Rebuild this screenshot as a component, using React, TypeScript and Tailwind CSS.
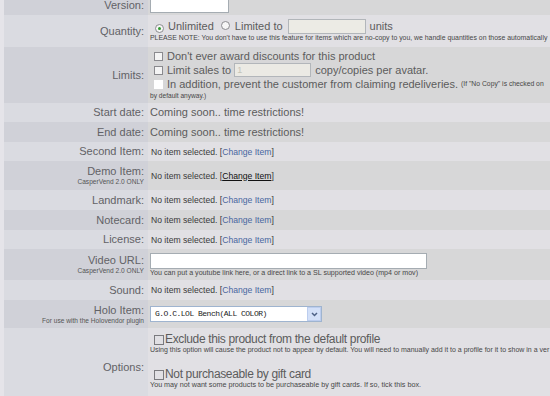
import React from "react";

const F = "font-['Liberation_Sans',Arial,sans-serif]";

function Row({
  dark,
  h,
  label,
  sub,
  labelTop,
  children,
  valueClass = "items-center",
}: {
  dark?: boolean;
  h: string;
  label: string;
  sub?: string;
  labelTop?: string;
  children: React.ReactNode;
  valueClass?: string;
}) {
  return (
    <div className={`flex ${h} shrink-0`}>
      <div className="w-[4px] shrink-0 bg-[#e5e4e9]" />
      <div
        className={`w-[144px] shrink-0 flex flex-col ${labelTop ? labelTop : "justify-center"} items-end pr-[4px] ${
          dark ? "bg-[#d0d1d8]" : "bg-[#dadbe1]"
        }`}
      >
        <div className="text-[11px] leading-[13px] text-[#626266] whitespace-nowrap">{label}</div>
        {sub && <div className="text-[6.6px] leading-[8px] text-[#555] whitespace-nowrap">{sub}</div>}
      </div>
      <div
        className={`flex-1 min-w-0 flex pl-[2px] overflow-hidden ${valueClass} ${
          dark ? "bg-[#d7d7d8]" : "bg-[#e1e0e4]"
        }`}
      >
        {children}
      </div>
    </div>
  );
}

function NoItem({ demo }: { demo?: boolean }) {
  return (
    <div className="text-[8.6px] leading-[10px] text-[#3a3a3a] whitespace-nowrap pl-[1px]">
      No item selected. [
      {demo ? (
        <span className="text-[#111] underline">Change Item</span>
      ) : (
        <span className="text-[#4866a0]">Change Item</span>
      )}
      ]
    </div>
  );
}

function Box({ plain }: { plain?: boolean }) {
  return (
    <span
      className={`inline-block w-[9px] h-[9px] shrink-0 ${
        plain ? "bg-white" : "bg-[#f4f4f4] border border-[#8a8a8e]"
      }`}
    />
  );
}

function Radio({ on }: { on?: boolean }) {
  return (
    <span className="inline-flex items-center justify-center w-[9px] h-[9px] rounded-full border border-[#8c8c90] bg-[#f6f6f6] shrink-0">
      {on && <span className="w-[3px] h-[3px] rounded-full bg-[#2f9a2f]" />}
    </span>
  );
}

export default function App() {
  return (
    <div className={`w-[550px] h-[396px] overflow-hidden bg-[#e1e0e4] ${F}`}>
      <div className="flex flex-col -mt-[4px]">
        <Row dark h="h-[19px]" label="Version:" valueClass="items-start">
          <div className="w-[79px] h-[17px] bg-white border border-[#a5acb2]" />
        </Row>

        <Row h="h-[32px]" label="Quantity:" valueClass="items-start">
          <div className="flex flex-col pt-[4px]">
            <div className="flex items-center h-[15px] text-[11px] text-[#5c5c5c] whitespace-nowrap">
              <span className="ml-[5px]"><Radio on /></span>
              <span className="ml-[4px]">Unlimited</span>
              <span className="ml-[7px]"><Radio /></span>
              <span className="ml-[5px]">Limited to</span>
              <span className="ml-[5px] w-[78px] h-[15px] bg-[#ecebe5] border border-[#b2b6ba]" />
              <span className="ml-[4px]">units</span>
            </div>
            <div className="text-[6.9px] leading-[8px] text-[#474747] whitespace-nowrap">
              PLEASE NOTE: You don't have to use this feature for items which are no-copy to you, we handle quantities on those automatically
            </div>
          </div>
        </Row>

        <Row dark h="h-[56px]" label="Limits:" valueClass="items-start">
          <div className="flex flex-col pt-[3px] text-[11px] text-[#5c5c5c] whitespace-nowrap">
            <div className="flex items-center h-[13px] leading-[13px]">
              <span className="ml-[4px] flex"><Box /></span>
              <span className="ml-[4px]">Don't ever award discounts for this product</span>
            </div>
            <div className="flex items-center h-[14px] leading-[14px]">
              <span className="ml-[4px] flex"><Box /></span>
              <span className="ml-[4px]">Limit sales to</span>
              <span className="ml-[3px] w-[77px] h-[14px] bg-[#ebeae4] border border-[#b2b6ba] text-[9px] leading-[12px] text-[#c4c4b8] pl-[2px]">1</span>
              <span className="ml-[4px]">copy/copies per avatar.</span>
            </div>
            <div className="flex items-center h-[14px] leading-[14px]">
              <span className="ml-[4px] flex"><Box plain /></span>
              <span className="ml-[4px]">In addition, prevent the customer from claiming redeliveries.</span>
              <span className="ml-[3px] text-[6.8px] text-[#474747]">(If "No Copy" is checked on</span>
            </div>
            <div className="h-[9px] text-[6.6px] leading-[9px] text-[#474747]">by default anyway.)</div>
          </div>
        </Row>

        <Row h="h-[19px]" label="Start date:">
          <div className="text-[11px] text-[#5c5c5c] whitespace-nowrap">Coming soon.. time restrictions!</div>
        </Row>
        <Row dark h="h-[20px]" label="End date:">
          <div className="text-[11px] text-[#5c5c5c] whitespace-nowrap">Coming soon.. time restrictions!</div>
        </Row>
        <Row h="h-[19px]" label="Second Item:">
          <NoItem />
        </Row>
        <Row dark h="h-[29px]" label="Demo Item:" sub="CasperVend 2.0 ONLY">
          <NoItem demo />
        </Row>
        <Row h="h-[20px]" label="Landmark:">
          <NoItem />
        </Row>
        <Row dark h="h-[20px]" label="Notecard:">
          <NoItem />
        </Row>
        <Row h="h-[19px]" label="License:">
          <NoItem />
        </Row>
        <Row dark h="h-[31px]" label="Video URL:" sub="CasperVend 2.0 ONLY">
          <div className="flex flex-col">
            <div className="w-[277px] h-[16px] bg-white border border-[#a5acb2]" />
            <div className="text-[7.1px] leading-[8px] text-[#474747] whitespace-nowrap">
              You can put a youtube link here, or a direct link to a SL supported video (mp4 or mov)
            </div>
          </div>
        </Row>
        <Row h="h-[20px]" label="Sound:">
          <NoItem />
        </Row>
        <Row dark h="h-[28px]" label="Holo Item:" sub="For use with the Holovendor plugin">
          <div className="w-[172px] h-[16px] bg-white border border-[#9fb4cf] flex items-center">
            <div className="flex-1 pl-[4px] font-['Liberation_Mono',monospace] text-[8px] tracking-[-0.5px] text-[#222] whitespace-nowrap">
              G.O.C.LOL Bench(ALL COLOR)
            </div>
            <div className="w-[14px] h-[14px] bg-[#d3e0f8] border border-[#bccdee] flex items-center justify-center">
              <svg width="7" height="5" viewBox="0 0 7 5">
                <path d="M1 1 L3.5 3.5 L6 1" stroke="#4d6185" strokeWidth="1.5" fill="none" />
              </svg>
            </div>
          </div>
        </Row>
        <Row h="h-[72px]" label="Options:" labelTop="justify-start pt-[33px]" valueClass="items-start">
          <div className="flex flex-col pt-[5px] whitespace-nowrap">
            <div className="flex items-center h-[13px] leading-[13px] text-[12px] tracking-[-0.35px] text-[#5c5c5c]">
              <span className="ml-[4px] w-[10px] h-[10px] border border-[#7a7a7e] shrink-0" />
              <span className="ml-[1px]">Exclude this product from the default profile</span>
            </div>
            <div className="h-[8px] text-[7px] leading-[8px] text-[#474747]">
              Using this option will cause the product not to appear by default. You will need to manually add it to a profile for it to show in a ver
            </div>
            <div className="h-[14px]" />
            <div className="flex items-center h-[13px] leading-[13px] text-[12px] tracking-[-0.35px] text-[#5c5c5c]">
              <span className="ml-[4px] w-[10px] h-[10px] border border-[#7a7a7e] shrink-0" />
              <span className="ml-[1px]">Not purchaseable by gift card</span>
            </div>
            <div className="h-[8px] text-[7.2px] leading-[8px] text-[#474747]">
              You may not want some products to be purchaseable by gift cards. If so, tick this box.
            </div>
          </div>
        </Row>
      </div>
    </div>
  );
}
